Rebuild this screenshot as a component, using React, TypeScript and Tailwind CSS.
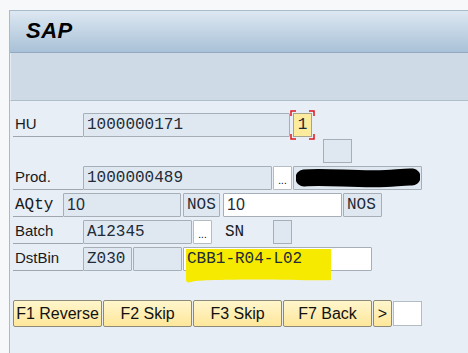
// SAP RF transaction screen: HU / product / batch / bin confirmation.

const SANS = { fontFamily: '"Liberation Sans", Arial, sans-serif' };
const MONO = { fontFamily: '"Liberation Mono", "Courier New", monospace' };

function Label({ text, w = "w-[70px]", mono = false }: { text: string; w?: string; mono?: boolean }) {
  return (
    <div
      className={`${w} h-full shrink-0 flex items-center pl-[2px] border-b border-[#9ea7b0] text-[15px] text-[#1a1a1a]`}
      style={mono ? { ...MONO, fontSize: 16 } : SANS}
    >
      {text}
    </div>
  );
}

function Field({
  w,
  value = "",
  white = false,
  sans = false,
  className = "",
  children,
}: {
  w: string;
  value?: string;
  white?: boolean;
  sans?: boolean;
  className?: string;
  children?: React.ReactNode;
}) {
  return (
    <div
      className={`${w} h-full shrink-0 relative flex items-center pl-[3px] border border-[#a6afb8] rounded-[1px] text-[#222b38] ${
        white ? "bg-white" : "bg-[#dfe8f1]"
      } ${className}`}
      style={sans ? { ...SANS, fontSize: 16 } : { ...MONO, fontSize: 16 }}
    >
      {value}
      {children}
    </div>
  );
}

function Dots() {
  return (
    <div className="w-[19px] h-full shrink-0 ml-[1px] bg-white border border-[#b3bbc3] rounded-[1px] flex items-end justify-center pb-[3px] text-[10px] leading-none text-black" style={SANS}>
      ...
    </div>
  );
}

function FKey({ label, w = "w-[89px]" }: { label: string; w?: string }) {
  return (
    <button
      type="button"
      className={`${w} h-full shrink-0 ml-[1px] first:ml-0 border border-[#8e8a78] rounded-[2px] bg-gradient-to-b from-[#fff6cc] to-[#ffe79a] text-[16px] text-[#111] flex items-center justify-center`}
      style={SANS}
    >
      {label}
    </button>
  );
}

export default function App() {
  return (
    <div className="w-[468px] h-[353px] overflow-hidden bg-[#f6f8fa] pt-[10px] pl-[9px]">
      <div className="h-full flex flex-col border-l border-t border-[#a9bbcb]">
        {/* title bar */}
        <div className="h-[42px] shrink-0 flex items-center pl-[16px] pb-[3px] border-b border-[#92a9bf] bg-gradient-to-b from-[#dde8f2] to-[#a9c1d7]">
          <span className="text-[22px] font-bold italic text-black tracking-[0.5px]" style={SANS}>
            SAP
          </span>
        </div>
        {/* toolbar */}
        <div className="h-[48px] shrink-0 bg-[#cedbe6] border-b border-[#aebdca] border-l border-l-[#e4ecf3]" />

        {/* form */}
        <div className="flex-1 bg-[#e8eef6] pt-[12px] pl-[3px] flex flex-col">
          {/* HU */}
          <div className="h-[24px] flex">
            <Label text="HU" />
            <Field w="w-[207px]" value="1000000171" />
            <div className="relative ml-[3px] w-[19px] h-full shrink-0">
              <div className="w-full h-full bg-[#fdeb9e] border border-[#a8a48c] flex items-center justify-center text-[16px] text-[#1d2a3a]" style={MONO}>
                1
              </div>
              <svg className="absolute -left-[3px] -top-[3px]" width="25" height="30" viewBox="0 0 25 30" fill="none" stroke="#e0161c" strokeWidth="1.5">
                <path d="M1 6V1H6M19 1H24V6M24 24V29H19M6 29H1V24" />
              </svg>
            </div>
          </div>

          {/* empty box */}
          <div className="h-[24px] mt-[2px] flex">
            <div className="ml-[310px] w-[29px] h-full border border-[#a6afb8] bg-[#dfe8f1]" />
          </div>

          {/* Prod. */}
          <div className="h-[24px] mt-[3px] flex">
            <Label text="Prod." />
            <Field w="w-[189px]" value="1000000489" />
            <Dots />
            <Field w="w-[129px]" className="ml-[1px]">
              <svg className="absolute left-[2px] top-[1px]" width="124" height="21" viewBox="0 0 124 21">
                <path d="M8 10C30 8 60 12 90 10.5C104 9.5 112 8.5 116 9" stroke="#000" strokeWidth="17" strokeLinecap="round" fill="none" />
              </svg>
            </Field>
          </div>

          {/* AQty */}
          <div className="h-[24px] mt-[3px] flex">
            <Label text="AQty" w="w-[50px]" mono />
            <Field w="w-[118px]" value="10" sans />
            <Field w="w-[37px]" value="NOS" className="ml-[2px]" />
            <Field w="w-[119px]" value="10" sans white className="ml-[3px]" />
            <Field w="w-[39px]" value="NOS" className="ml-[1px]" />
          </div>

          {/* Batch */}
          <div className="h-[24px] mt-[3px] flex">
            <Label text="Batch" />
            <Field w="w-[109px]" value="A12345" />
            <Dots />
            <div className="ml-[13px] w-[48px] h-full flex items-center text-[16px] text-[#1a1a1a]" style={MONO}>
              SN
            </div>
            <div className="w-[19px] h-full border border-[#a6afb8] bg-[#dfe8f1]" />
          </div>

          {/* DstBin */}
          <div className="relative z-10 h-[24px] mt-[3px] flex">
            <Label text="DstBin" />
            <Field w="w-[49px]" value="Z030" />
            <Field w="w-[49px]" className="ml-[1px]" />
            <Field w="w-[189px]" white className="ml-[1px]">
              {/* marker highlight drawn over the screenshot */}
              <svg className="absolute left-[1px] top-0 overflow-visible" width="148" height="36" viewBox="0 0 148 36">
                <path d="M1 1H146V32C128 33 96 31 60 31.5C30 32 12 32 6 34C3 35 1 34 1 32Z" fill="#f6ea00" />
              </svg>
              <span className="relative">CBB1-R04-L02</span>
            </Field>
          </div>

          {/* function keys */}
          <div className="h-[27px] mt-[29px] flex items-center">
            <FKey label="F1 Reverse" />
            <FKey label="F2 Skip" />
            <FKey label="F3 Skip" />
            <FKey label="F7 Back" />
            <FKey label=">" w="w-[19px]" />
            <div className="ml-[1px] w-[29px] h-[25px] bg-white border border-[#b3bbc3]" />
          </div>
        </div>
      </div>
    </div>
  );
}
